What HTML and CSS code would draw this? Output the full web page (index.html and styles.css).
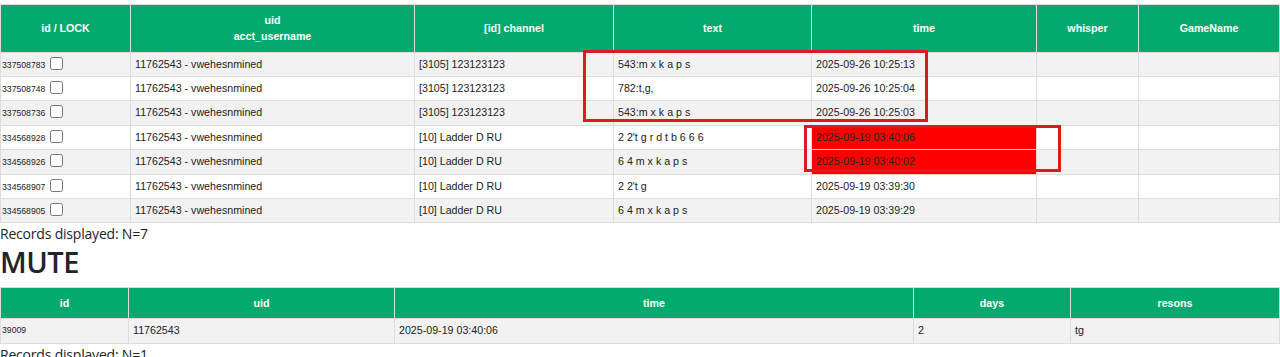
FILE: index.html
```html
<!DOCTYPE html>
<html>
<head>
<meta charset="utf-8">
<link rel="stylesheet" href="styles.css">
</head>
<body>
<div class="page">
  <table class="grid chat">
    <colgroup>
      <col class="c1"><col class="c2"><col class="c3"><col class="c4"><col class="c5"><col class="c6"><col class="c7">
    </colgroup>
    <tr>
      <th>id / LOCK</th>
      <th class="two">uid<br>acct_username</th>
      <th>[id] channel</th>
      <th>text</th>
      <th>time</th>
      <th>whisper</th>
      <th>GameName</th>
    </tr>
    <tr>
      <td class="idc"><span class="sid">337508783</span> <input type="checkbox"></td>
      <td>11762543 - vwehesnmined</td><td>[3105] 123123123</td><td>543:m x k a p s</td><td>2025-09-26 10:25:13</td><td></td><td></td>
    </tr>
    <tr>
      <td class="idc"><span class="sid">337508748</span> <input type="checkbox"></td>
      <td>11762543 - vwehesnmined</td><td>[3105] 123123123</td><td>782:t,g,</td><td>2025-09-26 10:25:04</td><td></td><td></td>
    </tr>
    <tr>
      <td class="idc"><span class="sid">337508736</span> <input type="checkbox"></td>
      <td>11762543 - vwehesnmined</td><td>[3105] 123123123</td><td>543:m x k a p s</td><td>2025-09-26 10:25:03</td><td></td><td></td>
    </tr>
    <tr>
      <td class="idc"><span class="sid">334568928</span> <input type="checkbox"></td>
      <td>11762543 - vwehesnmined</td><td>[10] Ladder D RU</td><td>2 2't g r d t b 6 6 6</td><td class="hot">2025-09-19 03:40:06</td><td></td><td></td>
    </tr>
    <tr>
      <td class="idc"><span class="sid">334568926</span> <input type="checkbox"></td>
      <td>11762543 - vwehesnmined</td><td>[10] Ladder D RU</td><td>6 4 m x k a p s</td><td class="hot">2025-09-19 03:40:02</td><td></td><td></td>
    </tr>
    <tr>
      <td class="idc"><span class="sid">334568907</span> <input type="checkbox"></td>
      <td>11762543 - vwehesnmined</td><td>[10] Ladder D RU</td><td>2 2't g</td><td>2025-09-19 03:39:30</td><td></td><td></td>
    </tr>
    <tr>
      <td class="idc"><span class="sid">334568905</span> <input type="checkbox"></td>
      <td>11762543 - vwehesnmined</td><td>[10] Ladder D RU</td><td>6 4 m x k a p s</td><td>2025-09-19 03:39:29</td><td></td><td></td>
    </tr>
  </table>
  <p class="count">Records displayed: N=7</p>
  <h2 class="title">MUTE</h2>
  <table class="grid mute">
    <colgroup>
      <col class="m1"><col class="m2"><col class="m3"><col class="m4"><col class="m5">
    </colgroup>
    <tr>
      <th>id</th><th>uid</th><th>time</th><th>days</th><th>resons</th>
    </tr>
    <tr>
      <td class="idc small">39009</td><td>11762543</td><td>2025-09-19 03:40:06</td><td>2</td><td>tg</td>
    </tr>
  </table>
  <p class="count">Records displayed: N=1</p>

  <div class="mark mark-a"></div>
  <div class="mark mark-b"></div>
</div>
</body>
</html>
```
FILE: styles.css
```css
html, body {
  margin: 0;
  padding: 0;
  background: #fff;
}
.page {
  position: relative;
  padding-top: 4px;
  font-family: "Open Sans", "Noto Sans", sans-serif;
  color: #212529;
}
.grid {
  border-collapse: collapse;
  table-layout: fixed;
  width: 1280px;
  font-family: "Liberation Sans", Arial, sans-serif;
  font-size: 10.67px;
  color: #222;
}
.grid th, .grid td {
  border: 1px solid #ddd;
}
.grid th {
  background: #04AA6D;
  color: #fff;
  font-weight: bold;
  text-align: center;
  padding: 7px 4px;
  line-height: 16px;
}
.grid th.two {
  line-height: 16.3px;
}
.grid td {
  padding: 5px 4px 5px 4px;
  line-height: 13.4px;
  text-align: left;
  white-space: nowrap;
}
.grid tr:nth-child(even) td {
  background: #f2f2f2;
}
.grid td.idc {
  padding-left: 1px;
}
.sid {
  font-size: 8.67px;
  line-height: 1;
}
.grid td.small {
  font-size: 8.67px;
  vertical-align: middle;
}
.grid input[type="checkbox"] {
  width: 13px;
  height: 13px;
  margin: -1px 0 0 2px;
  vertical-align: top;
}
.grid td.hot {
  background: #ff0000 !important;
  border-color: #f4d0d0;
}
.c1 { width: 130px; }
.c2 { width: 284px; }
.c3 { width: 199px; }
.c4 { width: 198px; }
.c5 { width: 225px; }
.c6 { width: 102px; }
.c7 { width: 141px; }
.m1 { width: 128px; }
.m2 { width: 266px; }
.m3 { width: 519px; }
.m4 { width: 157px; }
.m5 { width: 209px; }

.count {
  margin: 0;
  font-size: 14px;
  line-height: 21px;
  letter-spacing: -0.2px;
}
.title {
  margin: 1px 0 7px 0;
  font-size: 29px;
  font-weight: 600;
  line-height: 34.8px;
  letter-spacing: -0.5px;
  color: #212529;
}
.mark {
  position: absolute;
  border: 3px solid #dc1a1f;
  box-sizing: border-box;
  pointer-events: none;
}
.mark-a {
  left: 583px;
  top: 50px;
  width: 345px;
  height: 72px;
}
.mark-b {
  left: 804px;
  top: 125px;
  width: 257px;
  height: 47px;
}
```
